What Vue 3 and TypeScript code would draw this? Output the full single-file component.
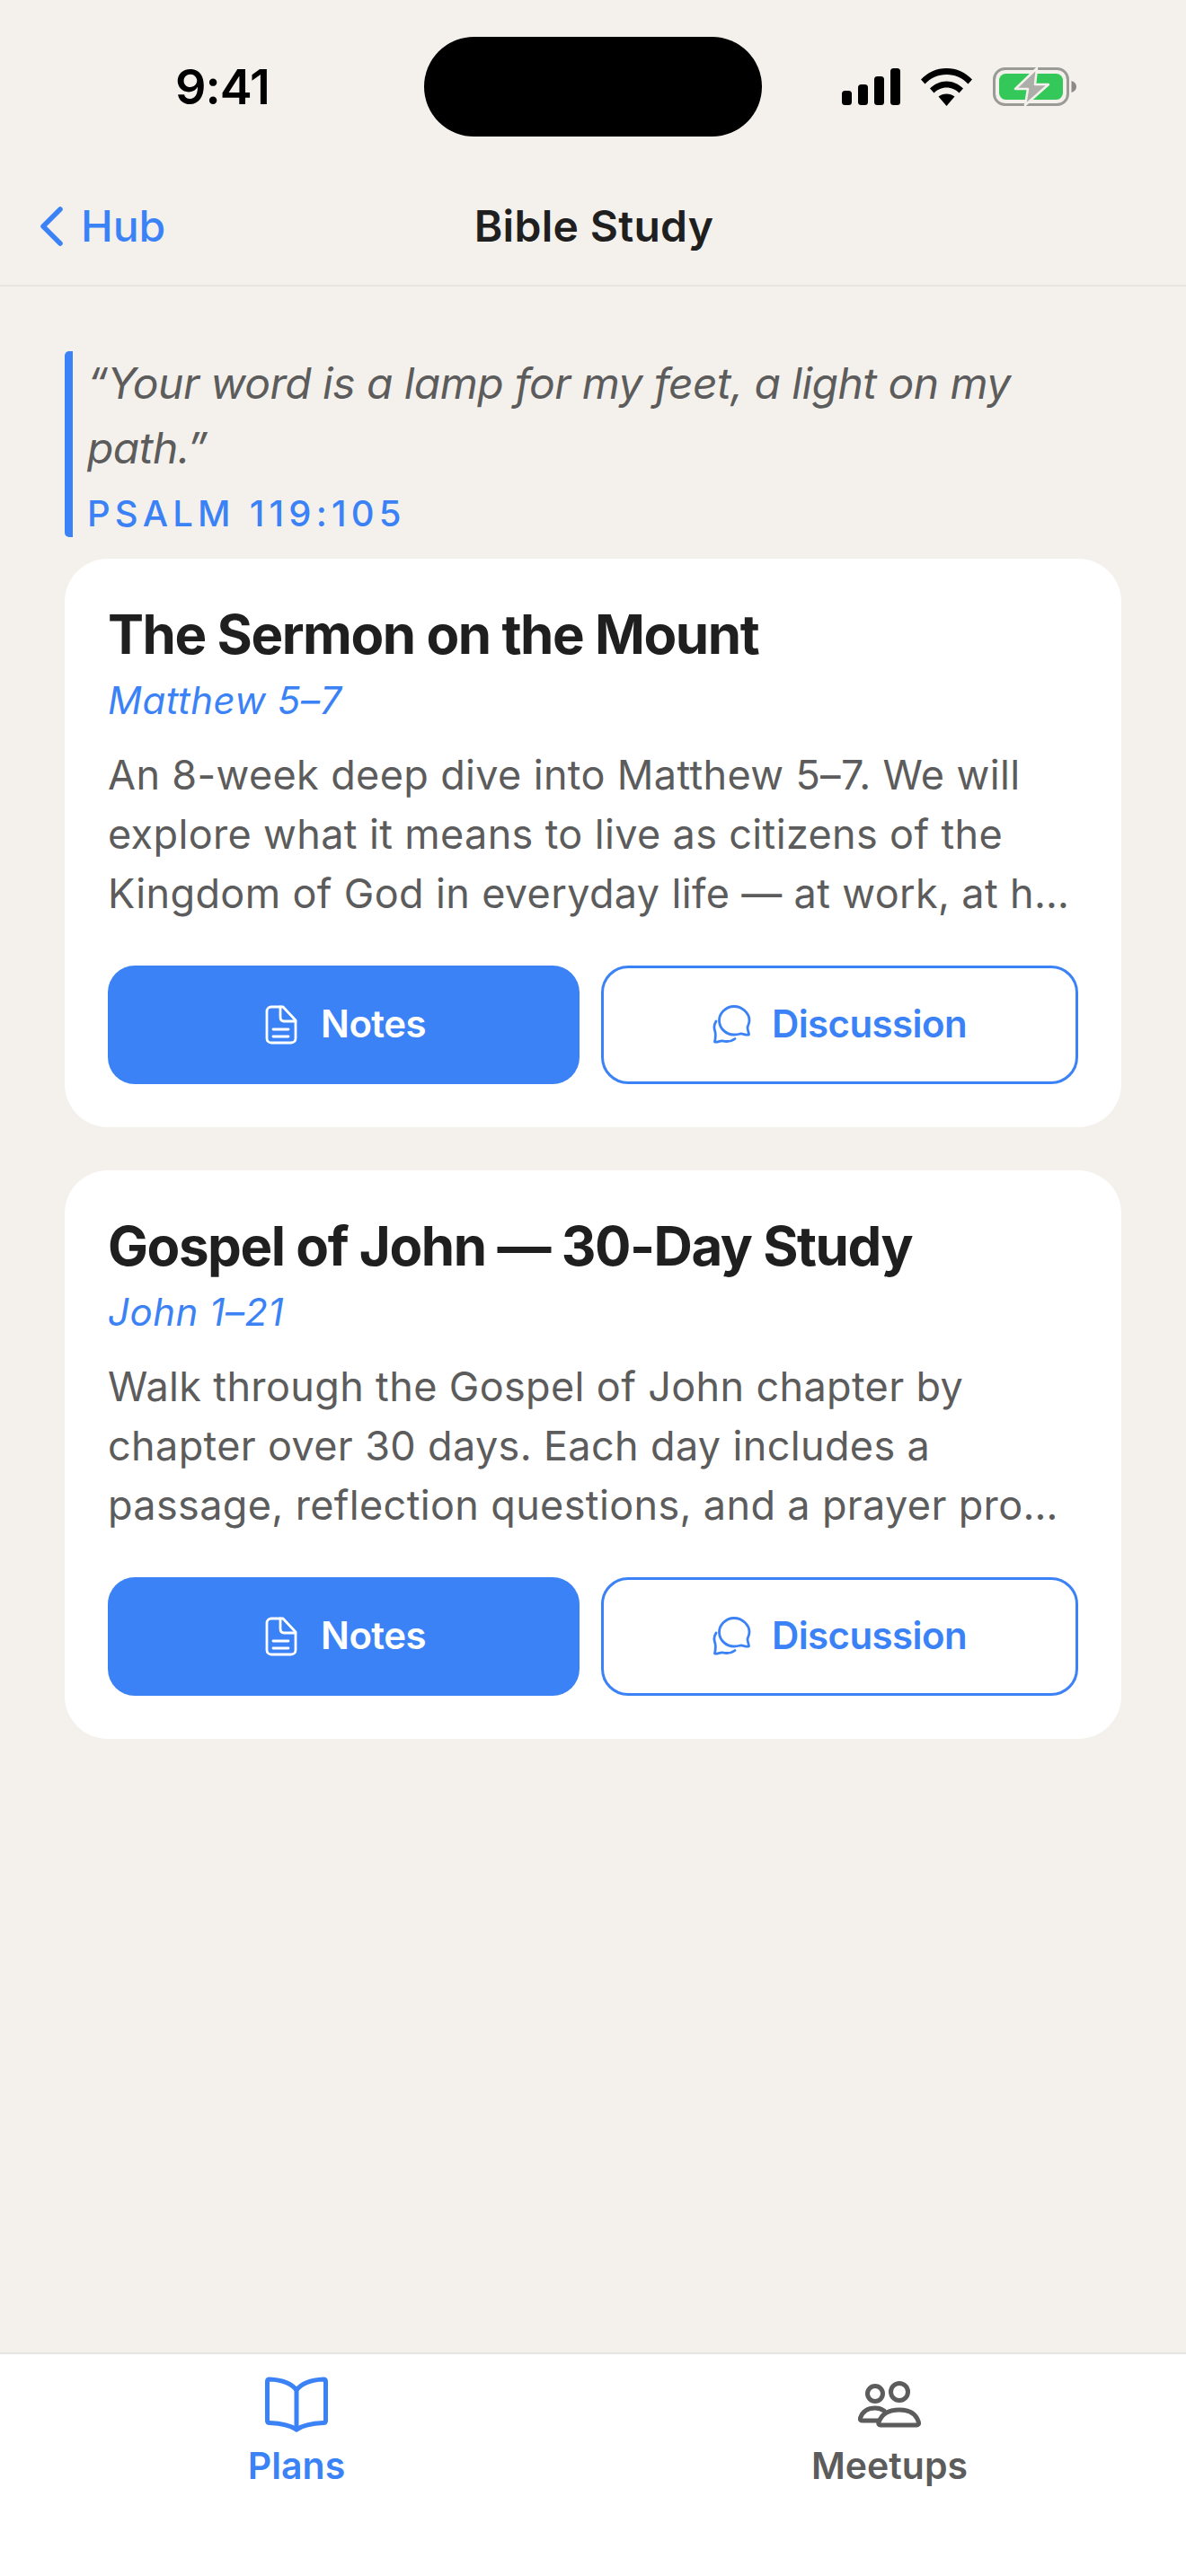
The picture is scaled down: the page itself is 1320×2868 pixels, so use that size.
<script setup lang="ts">
interface StudyPlan {
  title: string;
  passage: string;
  description: string;
}

const plans: StudyPlan[] = [
  {
    title: 'The Sermon on the Mount',
    passage: 'Matthew 5–7',
    description:
      'An 8-week deep dive into Matthew 5–7. We will explore what it means to live as citizens of the Kingdom of God in everyday life — at work, at h…',
  },
  {
    title: 'Gospel of John — 30-Day Study',
    passage: 'John 1–21',
    description:
      'Walk through the Gospel of John chapter by chapter over 30 days. Each day includes a passage, reflection questions, and a prayer pro…',
  },
];
</script>

<template>
  <div class="screen">
    <div class="status-bar">
      <span class="time">9:41</span>
      <div class="island"></div>
      <div class="status-icons">
        <svg width="65" height="41" viewBox="0 0 65 41" fill="#000">
          <rect x="0" y="25" width="11" height="16" rx="3.5" />
          <rect x="18" y="18" width="11" height="23" rx="3.5" />
          <rect x="36" y="9" width="11" height="32" rx="3.5" />
          <rect x="54" y="0" width="11" height="41" rx="3.5" />
        </svg>
        <svg width="57" height="42" viewBox="0 0 57 42" fill="#000">
          <path d="M0 12.5C7.5 4.5 17.5 0 28.5 0S49.500 4.500 57 12.500L52.500 17.500C46.500 11 38 7 28.500 7S10.500 11 4.500 17.500Z" />
          <path d="M10 22.500C15 17.500 21.500 14.500 28.500 14.500S42 17.500 47 22.500L42.500 27.500C39 24 34 21.500 28.500 21.500S18 24 14.500 27.500Z" />
          <path d="M19.500 31.500C22 29.500 25 28.500 28.500 28.500S35 29.500 37.500 31.500L28.500 42Z" />
        </svg>
        <svg width="93" height="43" viewBox="0 0 93 43">
          <rect x="1.500" y="1.500" width="82" height="40" rx="12" fill="none" stroke="#9a9a97" stroke-width="3" />
          <rect x="7" y="7" width="71" height="29" rx="7.500" fill="#34c759" />
          <path d="M87.500 15C91 16 93 18.500 93 21.500S91 27 87.500 28Z" fill="#8a8a88" />
          <path d="M49 1L25 24H39L36 42L62 19H47Z" fill="#adadaa" stroke="#f4f1ec" stroke-width="2.500" stroke-linejoin="round" />
        </svg>
      </div>
    </div>

    <header class="nav">
      <a class="back">
        <svg width="27" height="44" viewBox="0 0 27 44" fill="none" stroke="#3b82f6" stroke-width="5.500" stroke-linecap="round" stroke-linejoin="round">
          <path d="M23 3L4 22L23 41" />
        </svg>
        <span>Hub</span>
      </a>
      <h1>Bible Study</h1>
    </header>

    <main class="content">
      <blockquote class="verse">
        <p>“Your word is a lamp for my feet, a light on my path.”</p>
        <cite>PSALM 119:105</cite>
      </blockquote>

      <article v-for="plan in plans" :key="plan.title" class="card">
        <h2>{{ plan.title }}</h2>
        <div class="passage">{{ plan.passage }}</div>
        <p class="description">{{ plan.description }}</p>
        <div class="actions">
          <button class="btn primary">
            <svg width="44" height="44" viewBox="-4 0 44 44" fill="none" stroke="#fff" stroke-width="2.800" stroke-linecap="round" stroke-linejoin="round">
              <path d="M7 2H20L34 17V37C34 40 32 42 29 42H7C4 42 2 40 2 37V7C2 4 4 2 7 2Z" />
              <path d="M17 2V13C17 16 18.500 18 21 18H34" />
              <path d="M9 27H26M9 35H26" />
            </svg>
            <span>Notes</span>
          </button>
          <button class="btn outline">
            <svg width="44" height="44" viewBox="0 0 44 44" fill="none" stroke="#3b82f6" stroke-width="2.800" stroke-linecap="round" stroke-linejoin="round">
              <path d="M24 1.500C33 1.500 41 9 41 17C41 20 40 22 39 24.500C38.500 27 40.500 30 40.500 33C37 34 34 31.500 31 32C29 32.500 26.500 33 24 33C15 33 7.500 26 7.500 17C7.500 9 15 1.500 24 1.500Z" />
              <path d="M4 18C1.500 22 1.500 25 2.500 28C4 32 3.500 36 2.500 41C5 42 8 39.500 11.500 40C16 41 21 40.500 25 37.500" />
            </svg>
            <span>Discussion</span>
          </button>
        </div>
      </article>
    </main>

    <nav class="tabs">
      <div class="tab active">
        <svg width="70" height="62" viewBox="0 0 70 62" fill="none" stroke="#3b82f6" stroke-width="5" stroke-linecap="round" stroke-linejoin="round">
          <path d="M35 15C29 7 18 3.500 5 3C3.500 3 2.500 4 2.500 5.500V49C2.500 50.500 3.500 51.500 5 51.500C18 52 28 54 35 59C42 54 52 52 65 51.500C66.500 51.500 67.500 50.500 67.500 49V5.500C67.500 4 66.500 3 65 3C52 3.500 41 7 35 15Z" />
          <path d="M35 15V59" />
        </svg>
        <span>Plans</span>
      </div>
      <div class="tab">
        <svg width="70" height="52" viewBox="0 0 70 52" fill="none" stroke="#5c5c5c" stroke-width="5" stroke-linecap="round" stroke-linejoin="round">
          <circle cx="19" cy="14" r="8.500" />
          <circle cx="46" cy="12" r="9.500" />
          <path d="M29 33C26 31 23 30 19 30C11 30 5 34 2.500 41C2 43 3 44 5 44H22" />
          <path d="M25 49C23 49 22.500 47.500 23 46C26 37 34 32 46 32C58 32 65 37 67.500 46C68 47.500 67 49 65 49Z" />
        </svg>
        <span>Meetups</span>
      </div>
    </nav>
  </div>
</template>

<style scoped>
.screen {
  width: 1320px;
  height: 2868px;
  display: flex;
  flex-direction: column;
  background: #f4f1ec;
  font-family: Inter, 'Liberation Sans', sans-serif;
  overflow: hidden;
}

.status-bar {
  position: relative;
  height: 200px;
  flex-shrink: 0;
}

.time {
  position: absolute;
  left: 195px;
  top: 64px;
  font-size: 54px;
  line-height: 66px;
  font-weight: 600;
  letter-spacing: -1px;
  color: #000;
}

.island {
  position: absolute;
  left: 472px;
  top: 41px;
  width: 376px;
  height: 111px;
  border-radius: 56px;
  background: #000;
}

.status-icons {
  position: absolute;
  left: 937px;
  top: 75px;
  display: flex;
  align-items: center;
  gap: 23px;
}

.nav {
  position: relative;
  height: 119px;
  flex-shrink: 0;
  display: flex;
  align-items: center;
  justify-content: center;
  border-bottom: 2px solid #e6e5e1;
  box-sizing: border-box;
}

.back {
  position: absolute;
  left: 44px;
  top: 21px;
  display: flex;
  align-items: center;
  gap: 19px;
  color: #3b82f6;
  font-size: 48px;
  line-height: 62px;
  font-weight: 500;
}

.nav h1 {
  margin: 0;
  font-size: 48px;
  font-weight: 600;
  letter-spacing: 0.3px;
  color: #1f1f1f;
  padding: 0 0 14px 2px;
}

.content {
  flex: 1;
  padding: 72px 72px 0;
}

.verse {
  margin: 0 0 24px;
  padding-left: 16px;
  border-left: 9px solid #3b82f6;
  border-radius: 5px;
}

.verse p {
  margin: 0;
  font-size: 48px;
  line-height: 72px;
  font-style: italic;
  letter-spacing: -0.55px;
  color: #5c5c5c;
}

.verse cite {
  display: block;
  padding-top: 10px;
  font-style: normal;
  font-size: 40px;
  line-height: 53px;
  font-weight: 550;
  letter-spacing: 5.2px;
  color: #3b82f6;
}

.card {
  background: #fff;
  border-radius: 48px;
  padding: 48px;
  margin-bottom: 48px;
}

.card h2 {
  margin: 0;
  font-size: 60px;
  line-height: 72px;
  font-weight: 700;
  letter-spacing: -1.45px;
  color: #1f1f1f;
}

.passage {
  margin-top: 8px;
  font-size: 42px;
  line-height: 60px;
  font-style: italic;
  letter-spacing: 0.5px;
  color: #3b82f6;
}

.description {
  margin: 20px 0 0;
  font-size: 45px;
  line-height: 66px;
  letter-spacing: 0.35px;
  color: #5c5c5c;
}

.actions {
  display: flex;
  gap: 24px;
  margin-top: 47px;
}

.btn {
  flex: 1;
  height: 132px;
  padding: 0;
  display: flex;
  align-items: center;
  justify-content: center;
  gap: 22px;
  font-family: inherit;
  font-size: 42px;
  font-weight: 600;
  letter-spacing: -0.6px;
  border-radius: 30px;
  border: 0;
}

.btn span {
  margin-top: -3px;
}

.btn.primary {
  background: #3b82f6;
  color: #fff;
}

.btn.outline {
  background: #fff;
  color: #3b82f6;
  border: 3px solid #3b82f6;
}

.tabs {
  height: 249px;
  flex-shrink: 0;
  display: grid;
  grid-template-columns: 1fr 1fr;
  background: #fff;
  border-top: 2px solid #e6e5e1;
  box-sizing: border-box;
}

.tab {
  display: flex;
  flex-direction: column;
  align-items: center;
  padding-top: 25px;
  color: #5c5c5c;
  font-size: 41px;
  font-weight: 600;
}

.tab svg {
  height: 62px;
}

.tab.active {
  color: #3b82f6;
}

.tab span {
  margin-top: 13px;
  line-height: 48px;
}
</style>
